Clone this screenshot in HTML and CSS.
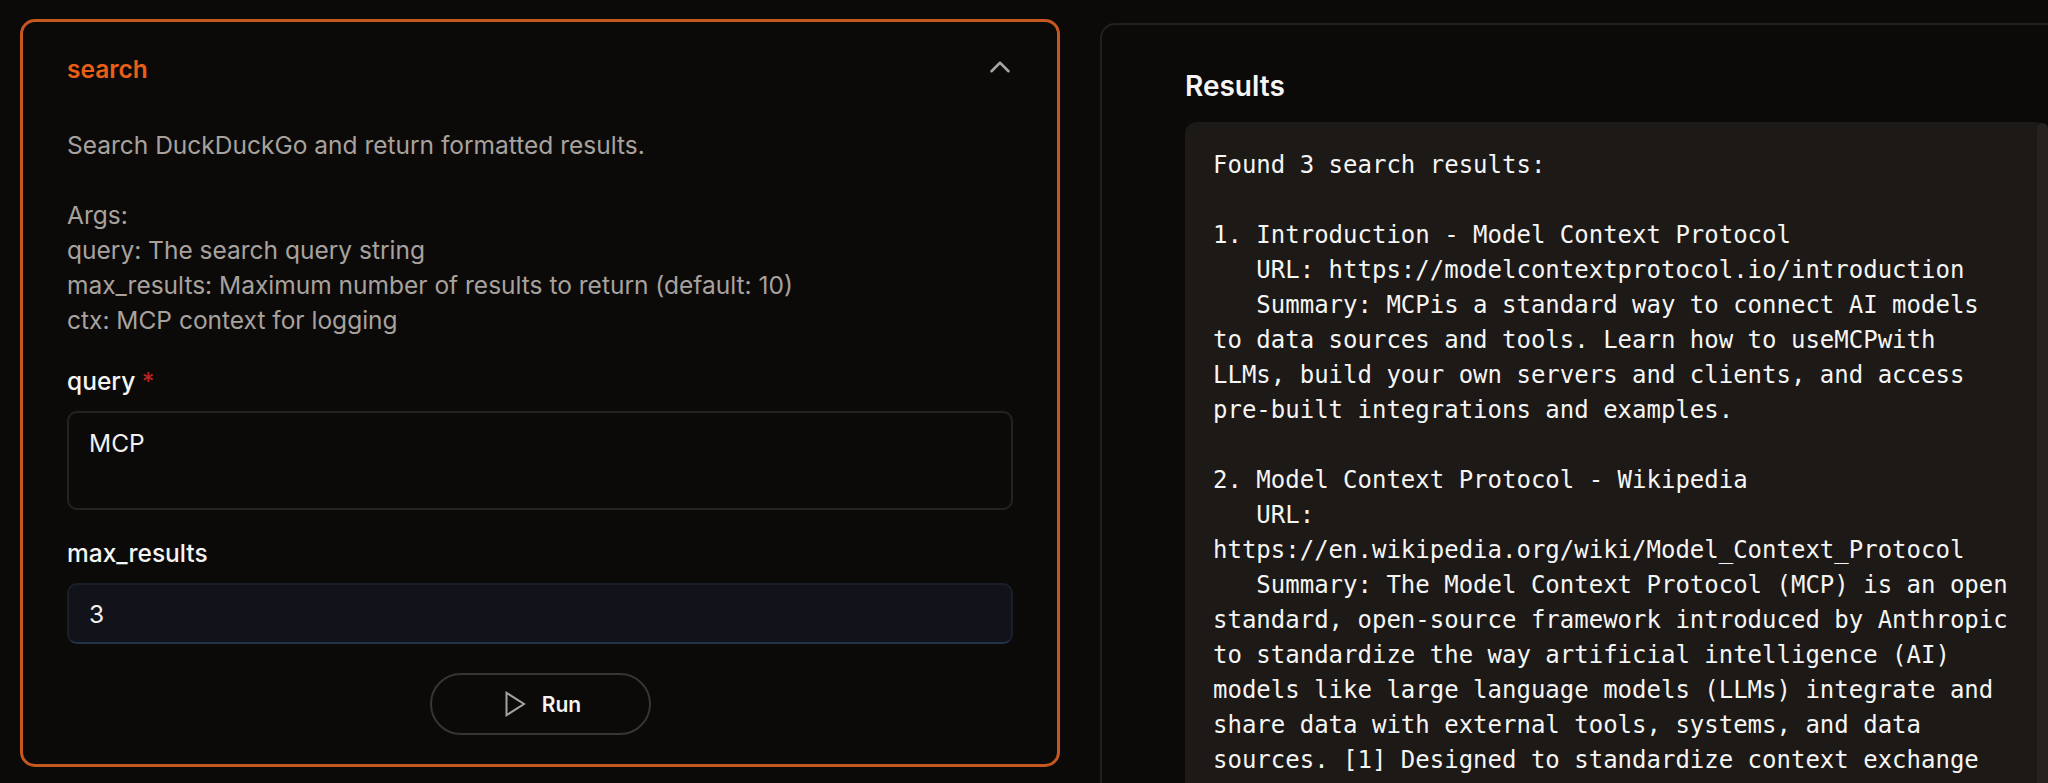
FILE: index.html
```html
<!DOCTYPE html>
<html lang="en">
<head>
<meta charset="utf-8">
<title>search tool</title>
<link rel="stylesheet" href="styles.css">
</head>
<body>
<div class="layout">
  <section class="tool-card">
    <header class="tool-header">
      <h2 class="tool-name">search</h2>
      <svg class="chevron" viewBox="0 0 24 24" aria-hidden="true"><path d="m18 15-6-6-6 6"/></svg>
    </header>
    <p class="tool-desc">Search DuckDuckGo and return formatted results.

Args:
query: The search query string
max_results: Maximum number of results to return (default: 10)
ctx: MCP context for logging</p>
    <div class="field">
      <label class="field-label" for="q">query <span class="req">*</span></label>
      <textarea id="q" class="text-area">MCP</textarea>
    </div>
    <div class="field">
      <label class="field-label" for="m">max_results</label>
      <input id="m" class="text-input" type="text" value="3">
    </div>
    <div class="actions">
      <button class="run-btn" type="button">
        <svg class="play" viewBox="0 0 24 24" aria-hidden="true"><polygon points="6 3 20 12 6 21 6 3"/></svg>
        <span>Run</span>
      </button>
    </div>
  </section>
  <section class="results-panel">
    <h3 class="results-title">Results</h3>
    <pre class="results-box">Found 3 search results:

1. Introduction - Model Context Protocol
   URL: https://modelcontextprotocol.io/introduction
   Summary: MCPis a standard way to connect AI models
to data sources and tools. Learn how to useMCPwith
LLMs, build your own servers and clients, and access
pre-built integrations and examples.

2. Model Context Protocol - Wikipedia
   URL:
https://en.wikipedia.org/wiki/Model_Context_Protocol
   Summary: The Model Context Protocol (MCP) is an open
standard, open-source framework introduced by Anthropic
to standardize the way artificial intelligence (AI)
models like large language models (LLMs) integrate and
share data with external tools, systems, and data
sources. [1] Designed to standardize context exchange
between AI assistants and software environments,</pre>
  </section>
</div>
</body>
</html>
```
FILE: styles.css
```css
html, body {
  margin: 0;
  padding: 0;
  height: 783px;
  overflow: hidden;
  background: #0c0a09;
}

body {
  font-family: Inter, "Noto Sans", "Liberation Sans", sans-serif;
  color: #f5f5f4;
}

.layout {
  display: flex;
  align-items: flex-start;
  gap: 40px;
  padding-left: 20px;
}

/* ---------- left tool card ---------- */
.tool-card {
  flex: none;
  box-sizing: border-box;
  width: 1040px;
  margin-top: 19px;
  border: 3px solid #c4581f;
  border-radius: 15px;
  background: #0c0a09;
  padding: 30px 44px 29px 44px;
  display: flex;
  flex-direction: column;
}

.tool-header {
  display: flex;
  align-items: center;
  justify-content: space-between;
  height: 35px;
}

.tool-name {
  margin: 0;
  font-size: 24.5px;
  line-height: 35px;
  font-weight: 600;
  color: #ea5f16;
}

.chevron {
  width: 34px;
  height: 34px;
  margin-right: -4px;
  margin-bottom: 6px;
  fill: none;
  stroke: #a8a29e;
  stroke-width: 1.8;
  stroke-linecap: round;
  stroke-linejoin: round;
}

.tool-desc {
  margin: 41px 0 0 0;
  white-space: pre-wrap;
  font-size: 24.5px;
  line-height: 35px;
  color: #a8a29e;
}

.field {
  display: flex;
  flex-direction: column;
  margin-top: 26px;
}

.field-label {
  font-size: 24.5px;
  line-height: 35px;
  font-weight: 500;
  color: #f5f5f4;
  margin-bottom: 12px;
}

.req {
  color: #b42525;
}

.text-area,
.text-input {
  box-sizing: border-box;
  width: 100%;
  margin: 0;
  font-family: inherit;
  font-size: 24.5px;
  line-height: 35px;
  color: #f2f1f0;
  border-radius: 10px;
  outline: none;
}

.text-area {
  height: 99px;
  resize: none;
  padding: 13px 20px;
  background: #0c0a09;
  border: 2px solid #262220;
  overflow: hidden;
}

.text-input {
  height: 61px;
  padding: 11px 20px;
  background: #11121a;
  border: 2px solid #1b1f29;
  border-bottom-color: #22324a;
}

.actions {
  display: flex;
  justify-content: center;
  margin-top: 29px;
}

.run-btn {
  box-sizing: border-box;
  width: 221px;
  height: 62px;
  border: 2px solid #383431;
  border-radius: 999px;
  background: transparent;
  color: #f5f5f4;
  display: flex;
  align-items: center;
  justify-content: center;
  gap: 13px;
  font-family: inherit;
  font-size: 21px;
  font-weight: 600;
  padding: 0;
}

.play {
  width: 30px;
  height: 30px;
  fill: none;
  stroke: #a8a29e;
  stroke-width: 1.6;
  stroke-linejoin: miter;
}

/* ---------- right results panel ---------- */
.results-panel {
  flex: none;
  box-sizing: border-box;
  margin-top: 23px;
  height: 900px;
  border: 2px solid #231f1d;
  border-radius: 15px;
  background: #0c0a09;
  padding: 44px 40px 0 83px;
}

.results-title {
  margin: 0;
  font-size: 28px;
  line-height: 35px;
  font-weight: 600;
  color: #f5f5f4;
}

.results-box {
  position: relative;
  box-sizing: border-box;
  width: 863px;
  margin: 18px 0 0 0;
  padding: 26px 28px;
  background: #1c1917;
  border-radius: 12px;
  font-family: "DejaVu Sans Mono", "Liberation Mono", monospace;
  font-size: 24px;
  line-height: 35px;
  color: #f5f5f4;
  white-space: pre;
  overflow: visible;
}

.results-box::after {
  content: "";
  position: absolute;
  top: 1px;
  right: 0;
  width: 11px;
  height: 1000px;
  background: #262220;
  border-radius: 6px 6px 0 0;
}
```
